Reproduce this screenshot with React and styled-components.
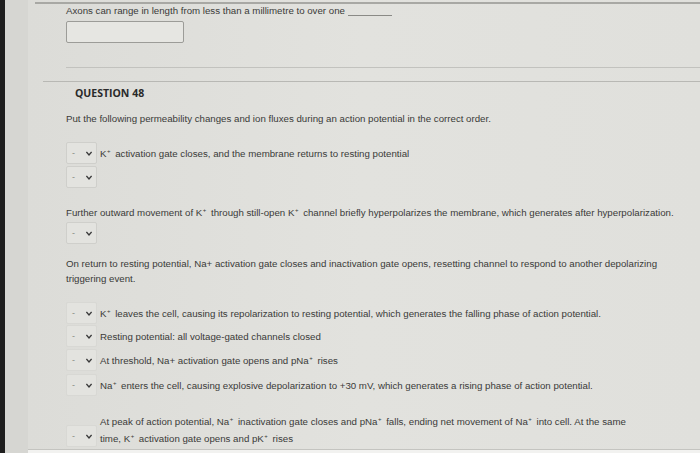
import React from "react";
import styled, { createGlobalStyle } from "styled-components";

const Global = createGlobalStyle`
  html, body { margin: 0; padding: 0; }
  body {
    width: 700px; height: 453px; overflow: hidden;
    background: #e0e0dc;
    font-family: "Liberation Sans", Arial, sans-serif;
  }
`;

const Page = styled.div`
  display: flex;
  width: 700px;
  height: 453px;
  overflow: hidden;
`;

const DarkEdge = styled.div`
  width: 5px;
  background: #1e1e1e;
`;

const Strip = styled.div`
  width: 23px;
  background: #d6d6d2;
`;

const Main = styled.div`
  flex: 1;
  display: flex;
  flex-direction: column;
  background: linear-gradient(90deg, #dcdcd8 0%, #e2e2de 50%, #e0e0dc 100%);
  position: relative;
`;

const Rule = styled.div`
  height: ${(p) => p.$h || 1}px;
  background: ${(p) => p.$c || "#b4b4b0"};
  margin-left: ${(p) => p.$left}px;
  margin-top: ${(p) => p.$top}px;
`;

const Text = styled.div`
  font-size: 9.7px;
  line-height: ${(p) => p.$lh || 12}px;
  color: #3a3a38;
  margin-left: ${(p) => p.$left}px;
  margin-top: ${(p) => p.$top}px;
  max-width: ${(p) => p.$max || 640}px;
  white-space: ${(p) => (p.$wrap ? "normal" : "nowrap")};
`;

const Blank = styled.span`
  display: inline-block;
  width: 44px;
  border-bottom: 1px solid #8a8a86;
  margin-left: 3px;
  vertical-align: -2px;
`;

const InputBox = styled.div`
  width: 116px;
  height: 20px;
  border: 1px solid #9c9c98;
  border-radius: 2px;
  background: #e6e6e2;
  margin-left: 38px;
  margin-top: ${(p) => p.$top}px;
`;

const Heading = styled.div`
  font-family: "Open Sans", "Liberation Sans", sans-serif;
  font-weight: 700;
  font-size: 10.5px;
  line-height: 14px;
  color: #2a2a2a;
  margin-left: 47px;
  margin-top: ${(p) => p.$top}px;
`;

const Row = styled.div`
  display: flex;
  align-items: ${(p) => p.$align || "center"};
  margin-left: 38px;
  margin-top: ${(p) => p.$top}px;
  height: ${(p) => p.$h || 22}px;
`;

const Select = styled.div`
  width: 31px;
  height: ${(p) => p.$h || 22}px;
  box-sizing: border-box;
  border: 1px solid ${(p) => (p.$faint ? "#d8d8d4" : "#cfcfcb")};
  border-radius: 2px;
  background: #e3e3df;
  display: flex;
  align-items: center;
  padding-left: 5px;
  gap: 11px;
  font-size: 9px;
  color: #8a8a86;
  flex-shrink: 0;
`;

const Chevron = () => (
  <svg width="6" height="5" viewBox="0 0 6 5">
    <path d="M0.4 1 L3 3.9 L5.6 1" fill="none" stroke="#3a3a3a" strokeWidth="1.4" />
  </svg>
);

const ItemText = styled.div`
  font-size: 9.7px;
  line-height: 17px;
  color: #3a3a38;
  margin-left: 3px;
  white-space: nowrap;
`;

const Sup = styled.sup`
  font-size: 6px;
  vertical-align: 4px;
  line-height: 0;
  margin: 0 2px 0 0.5px;
`;

const TwoLine = styled.div`
  display: flex;
  flex-direction: column;
  margin-left: 3px;
  font-size: 9.7px;
  line-height: 17px;
  color: #3a3a38;
  white-space: nowrap;
`;

const BottomEdge = styled.div`
  position: absolute;
  left: 0;
  right: 0;
  bottom: 0;
  height: 3px;
  background: #f2f2f0;
  border-top: 1px solid #c4c4c0;
`;

const Drop = ({ faint, h }) => (
  <Select $faint={faint} $h={h}>
    <span>-</span>
    <Chevron />
  </Select>
);

export default function App() {
  return (
    <>
      <Global />
      <Page>
        <DarkEdge />
        <Strip />
        <Main>
          <Rule $left={7} $top={2} $h={2} $c="#a8a8a4" />
          <Text $left={38} $top={1}>
            Axons can range in length from less than a millimetre to over one
            <Blank />
          </Text>
          <InputBox $top={4} />
          <Rule $left={38} $top={24} $c="#c2c2be" />
          <Rule $left={15} $top={13} $c="#b8b8b4" />
          <Heading $top={4}>QUESTION 48</Heading>
          <Text $left={38} $top={13}>
            Put the following permeability changes and ion fluxes during an action potential in the correct order.
          </Text>
          <Row $top={17}>
            <Drop />
            <ItemText>
              K<Sup>+</Sup> activation gate closes, and the membrane returns to resting potential
            </ItemText>
          </Row>
          <Row $top={2}>
            <Drop />
          </Row>
          <Text $left={38} $top={19}>
            Further outward movement of K<Sup>+</Sup> through still-open K<Sup>+</Sup> channel briefly hyperpolarizes the membrane, which generates after hyperpolarization.
          </Text>
          <Row $top={3}>
            <Drop />
          </Row>
          <Text $left={38} $top={12} $lh={15} $wrap $max={620}>
            On return to resting potential, Na+ activation gate closes and inactivation gate opens, resetting channel to respond to another depolarizing triggering event.
          </Text>
          <Row $top={16}>
            <Drop faint />
            <ItemText>
              K<Sup>+</Sup> leaves the cell, causing its repolarization to resting potential, which generates the falling phase of action potential.
            </ItemText>
          </Row>
          <Row $top={1}>
            <Drop faint />
            <ItemText>Resting potential: all voltage-gated channels closed</ItemText>
          </Row>
          <Row $top={2}>
            <Drop faint />
            <ItemText>
              At threshold, Na+ activation gate opens and pNa<Sup>+</Sup> rises
            </ItemText>
          </Row>
          <Row $top={3}>
            <Drop faint />
            <ItemText>
              Na<Sup>+</Sup> enters the cell, causing explosive depolarization to +30 mV, which generates a rising phase of action potential.
            </ItemText>
          </Row>
          <Row $top={17} $h={34} $align="flex-end">
            <Drop faint />
            <TwoLine>
              <span>
                At peak of action potential, Na<Sup>+</Sup> inactivation gate closes and pNa<Sup>+</Sup> falls, ending net movement of Na<Sup>+</Sup> into cell. At the same
              </span>
              <span>
                time, K<Sup>+</Sup> activation gate opens and pK<Sup>+</Sup> rises
              </span>
            </TwoLine>
          </Row>
          <BottomEdge />
        </Main>
      </Page>
    </>
  );
}
